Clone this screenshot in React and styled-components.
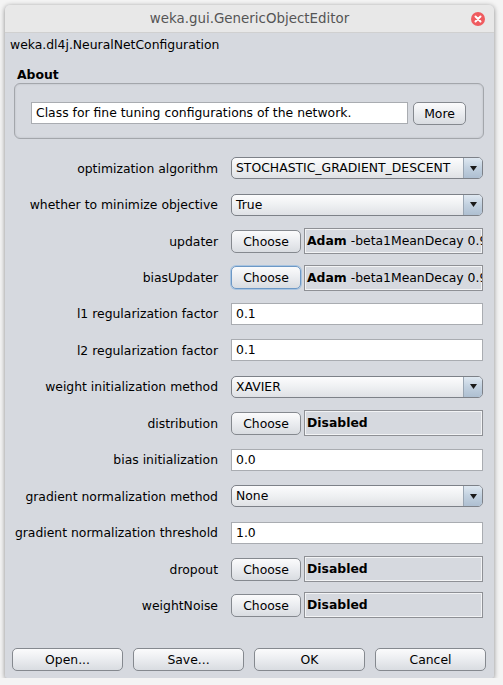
import React from "react";
import styled, { createGlobalStyle, css } from "styled-components";

const Global = createGlobalStyle`
  html, body { margin: 0; padding: 0; background: #f4f4f4; }
  body { font-family: "DejaVu Sans", "Liberation Sans", sans-serif; font-size: 12.4px; color: #000; }
`;

const Window = styled.div`
  margin: 5px 0 0 5px;
  width: 489px;
  height: 673px;
  background: #d6d9df;
  border-radius: 5px 5px 2px 2px;
  box-shadow: 0 1px 5px rgba(0,0,0,0.45);
  display: flex;
  flex-direction: column;
  overflow: hidden;
`;

const TitleBar = styled.div`
  height: 28px;
  flex: none;
  background: #e8e8e8;
  position: relative;
  display: flex;
  align-items: center;
  justify-content: center;
  font-size: 13.4px;
  color: #555;
  font-family: "DejaVu Sans", sans-serif;
  border-bottom: 1px solid #d0d0d0;
  box-sizing: border-box;
`;

const CloseBtn = styled.div`
  position: absolute;
  right: 9px;
  top: 7px;
  width: 14px;
  height: 14px;
  border-radius: 50%;
  background: #ef5b5f;
  display: flex;
  align-items: center;
  justify-content: center;
`;

const ClassName = styled.div`
  height: 24px;
  line-height: 24px;
  padding-left: 5px;
`;

const AboutLabel = styled.div`
  margin: 10px 0 0 12px;
  font-weight: bold;
  line-height: 16px;
`;

const AboutBox = styled.div`
  margin: 0 10px 0 9px;
  height: 56px;
  box-sizing: border-box;
  border: 1px solid #a3a6ab;
  border-radius: 6px;
  box-shadow: inset 0 0 2px rgba(0,0,0,0.15);
  padding: 18px 17px 0 16px;
  display: flex;
  gap: 5px;
`;

const TextField = styled.div`
  flex: 1;
  height: 22px;
  box-sizing: border-box;
  background: #fff;
  border: 1px solid #a9acb1;
  padding: 0 4px;
  line-height: 20px;
  white-space: nowrap;
  overflow: hidden;
`;

const buttonBase = css`
  box-sizing: border-box;
  height: 23px;
  border: 1px solid ${(p) => (p.$focused ? "#6c98c6" : "#85898f")};
  box-shadow: ${(p) => (p.$focused ? "0 0 0 1px #a9c4e0" : "none")};
  border-radius: 5px;
  background: linear-gradient(#fbfbfc, #eceef1 45%, #d9dce1);
  display: flex;
  align-items: center;
  justify-content: center;
  font-family: "DejaVu Sans", sans-serif;
  font-size: 12.4px;
  color: #000;
`;

const Button = styled.div`
  ${buttonBase}
  width: ${(p) => p.$w || "auto"};
  flex: none;
`;

const Rows = styled.div`
  margin-top: 11px;
  display: grid;
  grid-template-columns: 213px 252px;
  column-gap: 13px;
  grid-auto-rows: 36.45px;
  align-items: center;
`;

const Label = styled.div`
  text-align: right;
  white-space: nowrap;
`;

const Combo = styled.div`
  box-sizing: border-box;
  height: 22px;
  border: 1px solid #7d8188;
  border-radius: 5px;
  background: linear-gradient(#fcfcfd, #eef0f2 50%, #dfe1e5);
  display: flex;
  overflow: hidden;
`;

const ComboText = styled.div`
  flex: 1;
  padding-left: 4px;
  line-height: 20px;
`;

const ComboArrow = styled.div`
  width: 18px;
  border-left: 1px solid #9aa6b3;
  background: linear-gradient(#dfe8f1, #c1d0df 50%, #aebfd1);
  display: flex;
  align-items: center;
  justify-content: center;
`;

const Input = styled.div`
  box-sizing: border-box;
  height: 22px;
  background: #fff;
  border: 1px solid #a9acb1;
  padding: 0 4px;
  line-height: 20px;
`;

const ChooseRow = styled.div`
  display: flex;
  align-items: center;
  gap: 3px;
`;

const Display = styled.div`
  flex: 1;
  min-width: 0;
  height: 26px;
  box-sizing: border-box;
  border: 1px solid #8e9095;
  box-shadow: inset 0 0 0 1px #f2f3f5;
  background: #d6d9df;
  padding: 0 2px;
  line-height: 24px;
  white-space: nowrap;
  overflow: hidden;
`;

const Bold = styled.b`
  font-weight: bold;
`;

const Footer = styled.div`
  margin: 24px 8px 0 7px;
  display: grid;
  grid-template-columns: repeat(4, 1fr);
  column-gap: 10px;
`;

const Arrow = () => (
  <svg width="7" height="5" viewBox="0 0 7 5">
    <path d="M0 0 H7 L3.5 5 Z" fill="#1a1a1a" />
  </svg>
);

const rows = [
  { label: "optimization algorithm", type: "combo", value: "STOCHASTIC_GRADIENT_DESCENT" },
  { label: "whether to minimize objective", type: "combo", value: "True" },
  { label: "updater", type: "choose", bold: "Adam", rest: " -beta1MeanDecay 0.9" },
  { label: "biasUpdater", type: "choose", bold: "Adam", rest: " -beta1MeanDecay 0.9", focused: true },
  { label: "l1 regularization factor", type: "input", value: "0.1" },
  { label: "l2 regularization factor", type: "input", value: "0.1" },
  { label: "weight initialization method", type: "combo", value: "XAVIER" },
  { label: "distribution", type: "choose", bold: "Disabled" },
  { label: "bias initialization", type: "input", value: "0.0" },
  { label: "gradient normalization method", type: "combo", value: "None" },
  { label: "gradient normalization threshold", type: "input", value: "1.0" },
  { label: "dropout", type: "choose", bold: "Disabled" },
  { label: "weightNoise", type: "choose", bold: "Disabled" },
];

function Control({ r }) {
  if (r.type === "combo")
    return (
      <Combo>
        <ComboText>{r.value}</ComboText>
        <ComboArrow>
          <Arrow />
        </ComboArrow>
      </Combo>
    );
  if (r.type === "input") return <Input>{r.value}</Input>;
  return (
    <ChooseRow>
      <Button $w="70px" $focused={r.focused}>Choose</Button>
      <Display>
        <Bold>{r.bold}</Bold>
        {r.rest}
      </Display>
    </ChooseRow>
  );
}

export default function App() {
  return (
    <>
      <Global />
      <Window>
        <TitleBar>
          weka.gui.GenericObjectEditor
          <CloseBtn>
            <svg width="8" height="8" viewBox="0 0 8 8">
              <path d="M1.5 1.5 L6.5 6.5 M6.5 1.5 L1.5 6.5" stroke="#fff" strokeWidth="2" strokeLinecap="round" />
            </svg>
          </CloseBtn>
        </TitleBar>
        <ClassName>weka.dl4j.NeuralNetConfiguration</ClassName>
        <AboutLabel>About</AboutLabel>
        <AboutBox>
          <TextField>Class for fine tuning configurations of the network.</TextField>
          <Button $w="53px">More</Button>
        </AboutBox>
        <Rows>
          {rows.map((r) => (
            <React.Fragment key={r.label}>
              <Label>{r.label}</Label>
              <Control r={r} />
            </React.Fragment>
          ))}
        </Rows>
        <Footer>
          <Button>Open...</Button>
          <Button>Save...</Button>
          <Button>OK</Button>
          <Button>Cancel</Button>
        </Footer>
      </Window>
    </>
  );
}
